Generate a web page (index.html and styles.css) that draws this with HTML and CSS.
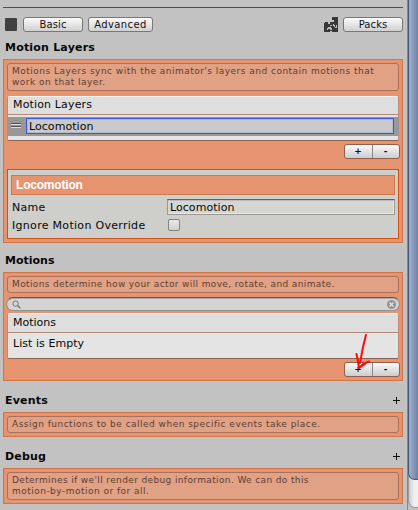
FILE: index.html
```
<!DOCTYPE html>
<html lang="en">
<head>
<meta charset="utf-8">
<title>Motion Controller</title>
<link rel="stylesheet" href="styles.css">
</head>
<body>
<div class="window">
  <main class="inspector">
    <div class="toolbar">
      <span class="swatch"></span>
      <button class="btn basic">Basic</button>
      <button class="btn advanced">Advanced</button>
      <svg class="puzzle" width="14" height="15" viewBox="0 0 14 15" shape-rendering="crispEdges">
        <path fill="#373737" d="M8 0h6v15H8v-1H6v1H0V6h1V5h3v2h2V5h4V3H8z"/>
        <path fill="#bdbdbd" d="M3 11h1v-1h3v1h1v2H6v-1H4v1H3zM6 8h2v1H6zM9 7h1v1h1v2h1V8h1v3h-2v-1h-1V9H9zM8 4h2v1H8z"/>
      </svg>
      <button class="btn packs">Packs</button>
    </div>

    <h2><span>Motion Layers</span></h2>
    <section class="box layers">
      <p class="help tall">Motions Layers sync with the animator's layers and contain motions that<br>work on that layer.</p>
      <div class="list">
        <div class="list-head">Motion Layers</div>
        <div class="row"><i class="handle"></i><div class="input">Locomotion</div></div>
      </div>
      <div class="pair"><button>+</button><button>-</button></div>
      <div class="detail">
        <div class="detail-title">Locomotion</div>
        <div class="field"><label>Name</label><div class="text">Locomotion</div></div>
        <div class="field second"><label>Ignore Motion Override</label><i class="check"></i></div>
      </div>
    </section>

    <h2 class="motions-title"><span>Motions</span></h2>
    <section class="box motions">
      <p class="help snug">Motions determine how your actor will move, rotate, and animate.</p>
      <div class="search">
        <svg width="9" height="9" viewBox="0 0 9 9"><circle cx="3.6" cy="3.6" r="2.7" fill="none" stroke="#777"/><path d="M5.6 5.6 8.3 8.3" stroke="#777" stroke-width="1.4"/></svg>
        <svg width="9" height="9" viewBox="0 0 9 9"><circle cx="4.5" cy="4.5" r="4.5" fill="#929292"/><path d="M2.5 2.5 6.5 6.5M6.5 2.5 2.5 6.5" stroke="#e4e4e4" stroke-width="1.2"/></svg>
      </div>
      <div class="list empty">
        <div class="list-head">Motions</div>
        <div class="none">List is Empty</div>
      </div>
      <div class="pair"><button>+</button><button>-</button></div>
      <svg class="arrow" width="17" height="38" viewBox="0 0 17 38"><path d="M11 1 8 13 5 29M1.500 20 4 33M2.500 24 4 34M4 34 8 30 14 27.500M4 34 10 30" fill="none" stroke="#ff0c0c" stroke-width="2" stroke-linecap="round"/></svg>
    </section>

    <h2 class="fold"><span>Events</span><i class="plus"></i></h2>
    <section class="box"><p class="help">Assign functions to be called when specific events take place.</p></section>

    <h2 class="fold"><span>Debug</span><i class="plus"></i></h2>
    <section class="box"><p class="help tall"><span class="snug">Determines if we'll render debug information. We can do this</span><br>motion-by-motion or for all.</p></section>
  </main>
  <aside class="scrollbar"><div class="track"><div class="thumb"></div></div></aside>
</div>
</body>
</html>
```
FILE: styles.css
```
* { box-sizing: border-box; }
body { margin: 0; background: #c2c2c2; color: #080808; font: 11px/14px "DejaVu Sans", sans-serif; letter-spacing: .3px; }
h2, p { margin: 0; }
i { font-style: normal; }
.window { width: 418px; height: 510px; display: flex; overflow: hidden; }
.inspector { width: 407px; padding: 7px 4px 0 3px; }
.toolbar { height: 33px; border-top: 1px solid #505050; padding: 9px 0 0 2px; display: flex; align-items: flex-start; }
.swatch { width: 12px; height: 13px; margin: 1px 6px 0 0; background: #414141; border-radius: 1px; }
button { margin: 0; padding: 0; color: #111; font: 10px/12px "DejaVu Sans", sans-serif; letter-spacing: .4px; }
.btn { height: 15px; width: 60px; border: 1px solid #777; border-radius: 3px; background: linear-gradient(#fbfbfb, #d0d0d0); }
.basic, .packs { letter-spacing: .1px; }
.advanced { width: 65px; margin-left: 5px; }
.puzzle { margin-left: auto; margin-right: 5px; }
h2 { height: 19px; padding: 0 3px 0 2px; font-size: 11px; line-height: 16px; letter-spacing: .2px; display: flex; justify-content: space-between; }
.box { position: relative; width: 400px; padding: 3px; border: 1px solid #d07448; background: #e6946f; }
.layers { height: 184px; }
.help { height: 17px; padding: 2px 4px; border: 1px solid #aa705a; border-radius: 3px; background: #e0a184; color: #5f4035; font-size: 9px; line-height: 11px; letter-spacing: .48px; white-space: nowrap; }
.snug { letter-spacing: .37px; }
.help.tall { height: 28px; }
.list { height: 45px; margin-top: 5px; border: 1px solid #bd8d77; border-top-color: #f4f4f4; border-bottom: 1px solid #8f634f; border-radius: 3px 3px 2px 2px; background: #e4e4e4; letter-spacing: .15px; }
.list-head { height: 18px; padding: 0 5px; line-height: 15px; background: #dedede; border-bottom: 1px solid #b48975; border-radius: 2px 2px 0 0; }
.row { height: 19px; margin: 2px -1px 0 0; background: #989898; display: flex; padding: 1px 5px 2px 3px; }
.handle { width: 10px; height: 5px; margin: 5px 5px 0 0; background: linear-gradient(#555 1px, #ddd 1px 2px, #989898 2px 3px, #555 3px 4px, #ddd 4px); }
.input { flex: 1; height: 16px; padding-left: 2px; line-height: 16px; border: 1px solid #3d58dd; background: #cacaca; box-shadow: inset 0 0 0 1px #b4b8ce; letter-spacing: .05px; }
.pair { width: 56px; height: 15px; margin: 3px -1px 0 auto; display: flex; border: 1px solid #8f604e; border-radius: 3px; background: linear-gradient(#fafafa, #ccc); }
.pair button { flex: 1; border: 0; background: none; color: #111; font-size: 9px; font-weight: bold; line-height: 13px; }
.pair button + button { border-left: 1px solid #888; }
.detail { height: 70px; margin-top: 10px; padding: 5px 3px; border: 1px solid #d05116; background: #cececb; }
.detail-title { height: 20px; padding-left: 4px; border: 1px solid #cf774d; background: #e6946f; color: #fff; font: bold 12px/19px "Liberation Sans", sans-serif; letter-spacing: -.2px; }
.field { display: flex; height: 16px; margin-top: 4px; padding-left: 1px; line-height: 18px; }
.field label { width: 155px; white-space: nowrap; }
.field.second { margin-top: 2px; }
.text { flex: 1; padding-left: 2px; line-height: 16px; border: 1px solid #999; border-top-color: #646464; background: #d5d5d2; box-shadow: inset 0 1px #bbb, inset -1px -1px #e8e8e8; letter-spacing: .05px; }
.check { width: 12px; height: 12px; margin: 2px 0 0 1px; border: 1px solid #818181; border-radius: 2px; background: linear-gradient(#e9e9e9, #d0d0d0); }
.motions-title { margin-top: 10px; letter-spacing: 0; }
.motions { height: 109px; }
.search { height: 14px; margin: 4px -1px 0; padding: 2px 3px 0 5px; display: flex; justify-content: space-between; border: 1px solid #909090; border-top: 1px solid #63564f; border-radius: 7px; background: #d4d4d4; box-shadow: inset 0 1px #aaa; }
.list.empty { height: 46px; margin-top: 2px; }
.empty .list-head { height: 19px; line-height: 17px; letter-spacing: 0; }
.none { padding: 4px 5px; letter-spacing: .05px; }
.arrow { position: absolute; left: 351px; top: 61px; }
.fold { margin-top: 12px; }
.plus { width: 7px; height: 7px; margin-top: 4px; background: linear-gradient(#111, #111) center/7px 1px no-repeat, linear-gradient(#111, #111) center/1px 7px no-repeat; }
.scrollbar { width: 11px; border-left: 1px solid #878787; overflow: hidden; background: #c2c2c2; }
.track { width: 15px; height: 508px; background: linear-gradient(90deg, #ccc, #f0f0f0 5px); border: 1px solid #999; border-top: 0; border-radius: 0 0 7px 7px; }
.thumb { width: 15px; height: 480px; margin-left: -1px; border: 1px solid #435779; border-top: 0; border-radius: 0 0 7px 7px; background: linear-gradient(90deg, #9eafcb, #697da0 10px); }
```
